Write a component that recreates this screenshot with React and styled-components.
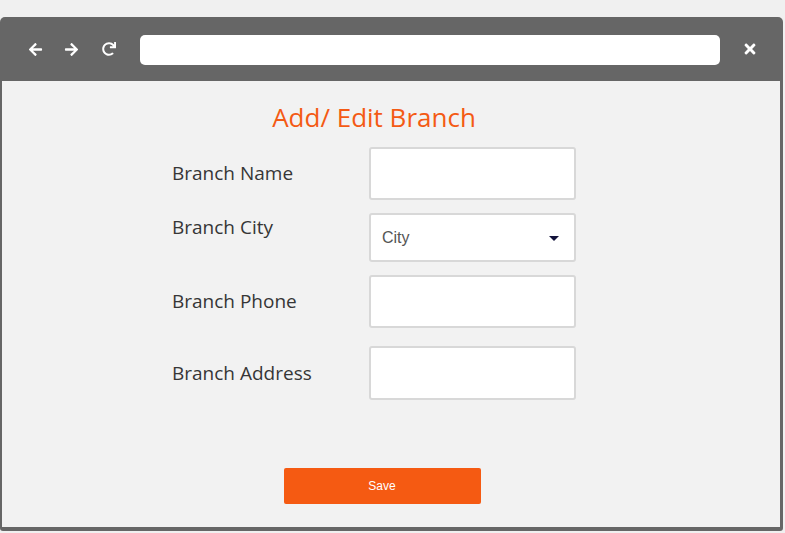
import React from "react";
import styled, { createGlobalStyle } from "styled-components";
import { FaArrowLeft, FaArrowRight, FaRedo, FaTimes } from "react-icons/fa";

const GlobalStyle = createGlobalStyle`
  html, body {
    margin: 0;
    padding: 0;
    background: #f0f0f0;
  }
`;

const Page = styled.div`
  width: 785px;
  height: 533px;
  padding-top: 17px;
  box-sizing: border-box;
  overflow: hidden;
`;

const Window = styled.div`
  width: 783px;
  height: 514px;
  box-sizing: border-box;
  background: #666666;
  border-radius: 5px 5px 3px 3px;
  padding: 0 3px 4px 2px;
  display: flex;
  flex-direction: column;
`;

const TopBar = styled.div`
  height: 64px;
  flex: 0 0 64px;
  display: flex;
  align-items: center;
  padding-left: 25px;
  padding-right: 22px;
  color: #ffffff;
`;

const NavButton = styled.span`
  display: flex;
  align-items: center;
  justify-content: center;
  width: 16px;
  margin-right: ${(p) => p.gap || 0}px;
  font-size: ${(p) => p.size || 15}px;
`;

const AddressBar = styled.div`
  flex: 1;
  height: 30px;
  margin-top: 2px;
  background: #ffffff;
  border-radius: 5px;
  margin-right: 22px;
`;

const Content = styled.div`
  flex: 1;
  background: #f2f2f2;
  display: flex;
  flex-direction: column;
  align-items: center;
  padding-top: 20px;
  padding-right: 34px;
  font-family: "Open Sans", sans-serif;
`;

const Title = styled.h1`
  margin: 0 0 13px 0;
  font-size: 26px;
  font-weight: 400;
  line-height: 33px;
  color: #f45a14;
`;

const Form = styled.div`
  display: flex;
  flex-direction: column;
  width: 404px;
  gap: 13px;
`;

const Row = styled.div`
  display: grid;
  grid-template-columns: 198px 206px;
  align-items: ${(p) => (p.top ? "start" : "center")};
  margin-top: ${(p) => p.extra || 0}px;
`;

const Label = styled.label`
  font-size: 19px;
  color: #363636;
  line-height: 25px;
  padding-top: ${(p) => (p.top ? 2 : 0)}px;
`;

const TextBox = styled.input`
  box-sizing: border-box;
  width: 207px;
  height: ${(p) => p.h || 53}px;
  border: 2px solid #d8d8d8;
  border-radius: 3px;
  background: #ffffff;
  outline: none;
  margin-left: -1px;
`;

const Select = styled.div`
  box-sizing: border-box;
  width: 207px;
  height: 49px;
  margin-left: -1px;
  border: 2px solid #d8d8d8;
  border-radius: 3px;
  background: #ffffff;
  display: flex;
  align-items: center;
  justify-content: space-between;
  padding: 0 15px 0 11px;
  font-family: "Liberation Sans", Arial, sans-serif;
  font-size: 16px;
  color: #555555;
`;

const Caret = styled.span`
  width: 0;
  height: 0;
  border-left: 5px solid transparent;
  border-right: 5px solid transparent;
  border-top: 5px solid #12123a;
  margin-top: 2px;
`;

const SaveButton = styled.button`
  margin-top: 68px;
  margin-left: 16px;
  width: 197px;
  height: 36px;
  border: none;
  border-radius: 2px;
  background: #f55a12;
  color: #ffffff;
  font-family: "Liberation Sans", Arial, sans-serif;
  font-size: 12px;
`;

export default function App() {
  return (
    <Page>
      <GlobalStyle />
      <Window>
        <TopBar>
          <NavButton gap={20}>
            <FaArrowLeft />
          </NavButton>
          <NavButton gap={22}>
            <FaArrowRight />
          </NavButton>
          <NavButton gap={23} size={14}>
            <FaRedo />
          </NavButton>
          <AddressBar />
          <NavButton size={16}>
            <FaTimes />
          </NavButton>
        </TopBar>
        <Content>
          <Title>Add/ Edit Branch</Title>
          <Form>
            <Row>
              <Label>Branch Name</Label>
              <TextBox />
            </Row>
            <Row top>
              <Label top>Branch City</Label>
              <Select>
                City
                <Caret />
              </Select>
            </Row>
            <Row>
              <Label>Branch Phone</Label>
              <TextBox />
            </Row>
            <Row extra={5}>
              <Label>Branch Address</Label>
              <TextBox h={54} />
            </Row>
          </Form>
          <SaveButton>Save</SaveButton>
        </Content>
      </Window>
    </Page>
  );
}
